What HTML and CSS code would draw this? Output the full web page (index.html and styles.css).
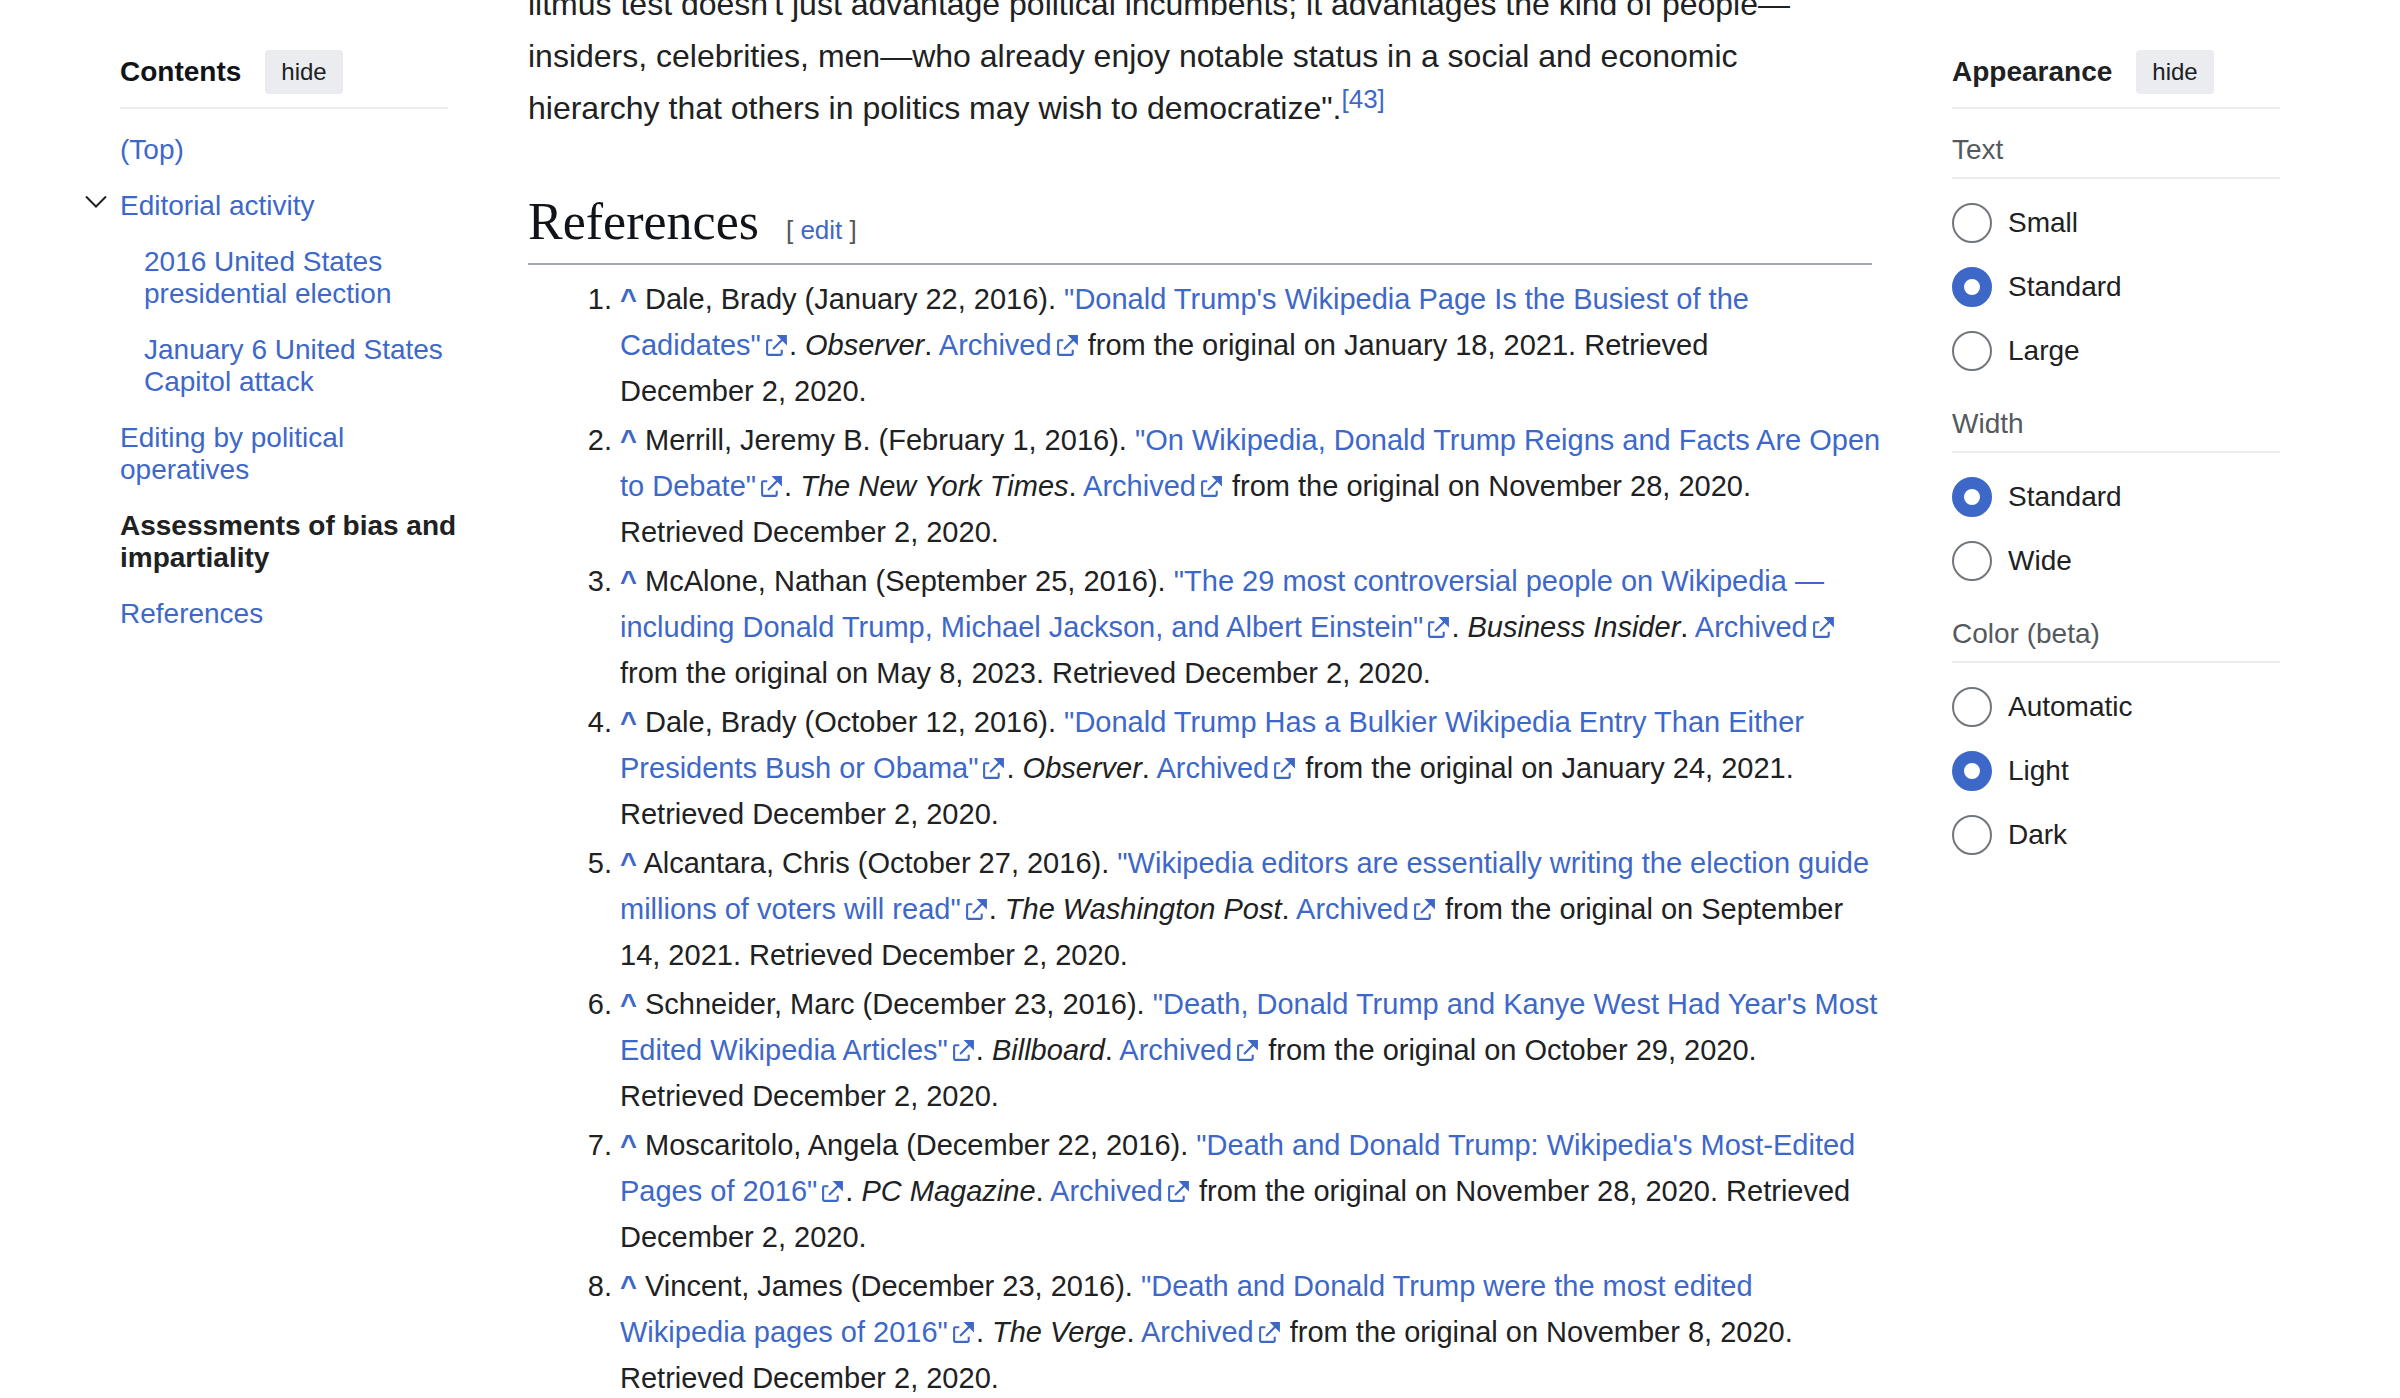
FILE: index.html
```html
<!DOCTYPE html>
<html lang="en">
<head>
<meta charset="utf-8">
<title>References</title>
<link rel="stylesheet" href="styles.css">
</head>
<body>
<svg class="sprite" aria-hidden="true">
  <symbol id="ext" viewBox="0 0 12 12">
    <path d="M6 1h5v5L8.86 3.85 4.7 8 4 7.3l4.15-4.16z"/>
    <path d="M2 3h2v1H2v6h6V8h1v2a1 1 0 0 1-1 1H2a1 1 0 0 1-1-1V4a1 1 0 0 1 1-1"/>
  </symbol>
</svg>
<div class="page">
  <nav class="toc" aria-labelledby="toc-title">
    <div class="panel-head">
      <h2 class="panel-title" id="toc-title">Contents</h2>
      <button class="hide-button" type="button">hide</button>
    </div>
    <ul class="toc-list">
      <li><a class="toc-link" href="#top">(Top)</a></li>
      <li>
        <div class="toc-parent">
          <button class="toc-toggle" type="button" aria-label="Toggle Editorial activity subsection" aria-expanded="true">
            <svg class="chevron" viewBox="0 0 22 14" aria-hidden="true"><path d="M1 1.500 11 11.500 21 1.500"/></svg>
          </button>
          <a class="toc-link" href="#editorial">Editorial activity</a>
        </div>
        <ul class="toc-sublist">
          <li><a class="toc-link" href="#election">2016 United States presidential election</a></li>
          <li><a class="toc-link" href="#capitol">January 6 United States Capitol attack</a></li>
        </ul>
      </li>
      <li><a class="toc-link" href="#operatives">Editing by political operatives</a></li>
      <li><a class="toc-link active" href="#bias">Assessments of bias and impartiality</a></li>
      <li><a class="toc-link" href="#references">References</a></li>
    </ul>
  </nav>

  <main class="article">
    <p class="prose">litmus test doesn't just advantage political incumbents; it advantages the kind of people—insiders, celebrities, men—who already enjoy notable status in a social and economic hierarchy that others in politics may wish to democratize".<sup><a href="#cite-43">[43]</a></sup></p>
    <div class="section-head">
      <h2 class="section-title" id="references">References</h2>
      <span class="edit-section">[ <a href="#edit">edit</a> ]</span>
    </div>
    <ol class="references">
      <li><a class="backlink" href="#r1">^</a> Dale, Brady (January 22, 2016). <a href="#s1">"Donald Trump's Wikipedia Page Is the Busiest of the Cadidates"<svg class="ext"><use href="#ext"/></svg></a>. <cite>Observer</cite>. <a href="#a1">Archived<svg class="ext"><use href="#ext"/></svg></a> from the original on January 18, 2021. Retrieved <span class="date">December 2, 2020.</span></li>
      <li><a class="backlink" href="#r2">^</a> Merrill, Jeremy B. (February 1, 2016). <a href="#s2">"On Wikipedia, Donald Trump Reigns and Facts Are Open to Debate"<svg class="ext"><use href="#ext"/></svg></a>. <cite>The New York Times</cite>. <a href="#a2">Archived<svg class="ext"><use href="#ext"/></svg></a> from the original on November 28, 2020. <span class="date">Retrieved December 2, 2020.</span></li>
      <li><a class="backlink" href="#r3">^</a> McAlone, Nathan (September 25, 2016). <a href="#s3">"The 29 most controversial people on Wikipedia — including Donald Trump, Michael Jackson, and Albert Einstein"<svg class="ext"><use href="#ext"/></svg></a>. <cite>Business Insider</cite>. <a href="#a3">Archived<svg class="ext"><use href="#ext"/></svg></a> from the original on May 8, 2023. Retrieved <span class="date">December 2, 2020.</span></li>
      <li><a class="backlink" href="#r4">^</a> Dale, Brady (October 12, 2016). <a href="#s4">"Donald Trump Has a Bulkier Wikipedia Entry Than Either Presidents Bush or Obama"<svg class="ext"><use href="#ext"/></svg></a>. <cite>Observer</cite>. <a href="#a4">Archived<svg class="ext"><use href="#ext"/></svg></a> from the original on January 24, 2021. Retrieved <span class="date">December 2, 2020.</span></li>
      <li><a class="backlink" href="#r5">^</a> Alcantara, Chris (October 27, 2016). <a href="#s5">"Wikipedia editors are essentially writing the election guide millions of voters will read"<svg class="ext"><use href="#ext"/></svg></a>. <cite>The Washington Post</cite>. <a href="#a5">Archived<svg class="ext"><use href="#ext"/></svg></a> from the original on September 14, 2021. Retrieved <span class="date">December 2, 2020.</span></li>
      <li><a class="backlink" href="#r6">^</a> Schneider, Marc (December 23, 2016). <a href="#s6">"Death, Donald Trump and Kanye West Had Year's Most Edited Wikipedia Articles"<svg class="ext"><use href="#ext"/></svg></a>. <cite>Billboard</cite>. <a href="#a6">Archived<svg class="ext"><use href="#ext"/></svg></a> from the original on October 29, 2020. Retrieved <span class="date">December 2, 2020.</span></li>
      <li><a class="backlink" href="#r7">^</a> Moscaritolo, Angela (December 22, 2016). <a href="#s7">"Death and Donald Trump: Wikipedia's Most-Edited Pages of 2016"<svg class="ext"><use href="#ext"/></svg></a>. <cite>PC Magazine</cite>. <a href="#a7">Archived<svg class="ext"><use href="#ext"/></svg></a> from the original on November 28, 2020. Retrieved <span class="date">December 2, 2020.</span></li>
      <li><a class="backlink" href="#r8">^</a> Vincent, James (December 23, 2016). <a href="#s8">"Death and Donald Trump were the most edited Wikipedia pages of 2016"<svg class="ext"><use href="#ext"/></svg></a>. <cite>The Verge</cite>. <a href="#a8">Archived<svg class="ext"><use href="#ext"/></svg></a> from the original on November 8, 2020. Retrieved <span class="date">December 2, 2020.</span></li>
    </ol>
  </main>

  <aside class="appearance" aria-labelledby="appearance-title">
    <div class="panel-head">
      <h2 class="panel-title" id="appearance-title">Appearance</h2>
      <button class="hide-button" type="button">hide</button>
    </div>
    <form class="options">
      <fieldset class="option-group">
        <legend>Text</legend>
        <div class="radios">
          <label class="radio"><input type="radio" name="text">Small</label>
          <label class="radio"><input type="radio" name="text" checked>Standard</label>
          <label class="radio"><input type="radio" name="text">Large</label>
        </div>
      </fieldset>
      <fieldset class="option-group">
        <legend>Width</legend>
        <div class="radios">
          <label class="radio"><input type="radio" name="width" checked>Standard</label>
          <label class="radio"><input type="radio" name="width">Wide</label>
        </div>
      </fieldset>
      <fieldset class="option-group">
        <legend>Color (beta)</legend>
        <div class="radios">
          <label class="radio"><input type="radio" name="color">Automatic</label>
          <label class="radio"><input type="radio" name="color" checked>Light</label>
          <label class="radio"><input type="radio" name="color">Dark</label>
        </div>
      </fieldset>
    </form>
  </aside>
</div>
</body>
</html>
```
FILE: styles.css
```css
:root {
  --text: #202122;
  --strong: #101418;
  --subtle: #54595d;
  --link: #3e68c8;
  --line: #eaecf0;
}

* { box-sizing: border-box; }

body {
  margin: 0;
  background: #fff;
  color: var(--text);
  font: 28px/32px "Liberation Sans", Arial, Helvetica, sans-serif;
}

h2, p, ul, ol, fieldset { margin: 0; padding: 0; }
ul { list-style: none; }
a { color: var(--link); text-decoration: none; }
a:hover { text-decoration: underline; }

.sprite { display: none; }

.page {
  display: grid;
  grid-template-columns: 400px minmax(0, 1fr) 392px;
  column-gap: 48px;
  align-items: start;
  padding: 0 88px 0 80px;
}

/* Side panels */
.toc { padding: 50px 16px 0 40px; }
.appearance { padding: 50px 32px 0; }

.panel-head {
  display: flex;
  align-items: center;
  gap: 24px;
  padding-bottom: 13px;
  border-bottom: 2px solid var(--line);
}
.toc .panel-head { margin-right: 16px; }
.panel-title { font-size: 28px; font-weight: bold; line-height: 32px; }
.toc .panel-title { color: var(--strong); }

.hide-button {
  height: 44px;
  padding: 0 16px;
  border: 0;
  border-radius: 4px;
  background: var(--line);
  color: var(--text);
  font: inherit;
  font-size: 24px;
  cursor: pointer;
}

/* Contents */
.toc-list { padding-top: 13px; }
.toc-link { display: block; padding: 12px 0; }
.toc-link.active { color: var(--text); font-weight: bold; }
.toc-sublist { padding-left: 24px; }
.toc-parent { display: flex; align-items: center; gap: 8px; margin-left: -40px; }
.toc-toggle {
  display: grid;
  place-items: center;
  width: 32px;
  height: 44px;
  padding: 0 0 8px;
  border: 0;
  background: none;
  cursor: pointer;
}
.chevron { width: 22px; height: 14px; fill: none; stroke: var(--text); stroke-width: 2; }

/* Article */
.article { margin-top: -22px; }
.prose { font-size: 32px; line-height: 52px; }
.prose sup { font-size: 26px; line-height: 1; vertical-align: 11px; }

.section-head {
  display: flex;
  align-items: baseline;
  gap: 27px;
  margin-top: 58px;
  padding-bottom: 11px;
  border-bottom: 2px solid #a2a9b1;
}
.section-title {
  color: var(--strong);
  font: 52px/60px "Liberation Serif", Georgia, serif;
}
.edit-section { color: var(--subtle); font-size: 26px; }

.references {
  margin-right: -12px;
  padding: 11px 0 0 92px;
  font-size: 29px;
  line-height: 46px;
}
.references li { margin-bottom: 3px; }
.backlink { font-weight: bold; }
.date { white-space: nowrap; }
.ext {
  width: 25px;
  height: 25px;
  margin-left: 3px;
  fill: currentColor;
  vertical-align: -3px;
}

/* Appearance */
.option-group { margin-top: 37px; border: 0; min-width: 0; }
.option-group:first-child { margin-top: 25px; }
.option-group legend {
  width: 100%;
  padding: 0 0 11px;
  border-bottom: 2px solid var(--line);
  color: var(--subtle);
}
.radios { display: grid; gap: 24px; padding-top: 24px; }
.radio { display: flex; align-items: center; gap: 16px; }
.radio input {
  appearance: none;
  width: 40px;
  height: 40px;
  margin: 0;
  border: 2px solid #72777d;
  border-radius: 50%;
  background: #fff;
}
.radio input:checked { border: 12px solid var(--link); }
```
